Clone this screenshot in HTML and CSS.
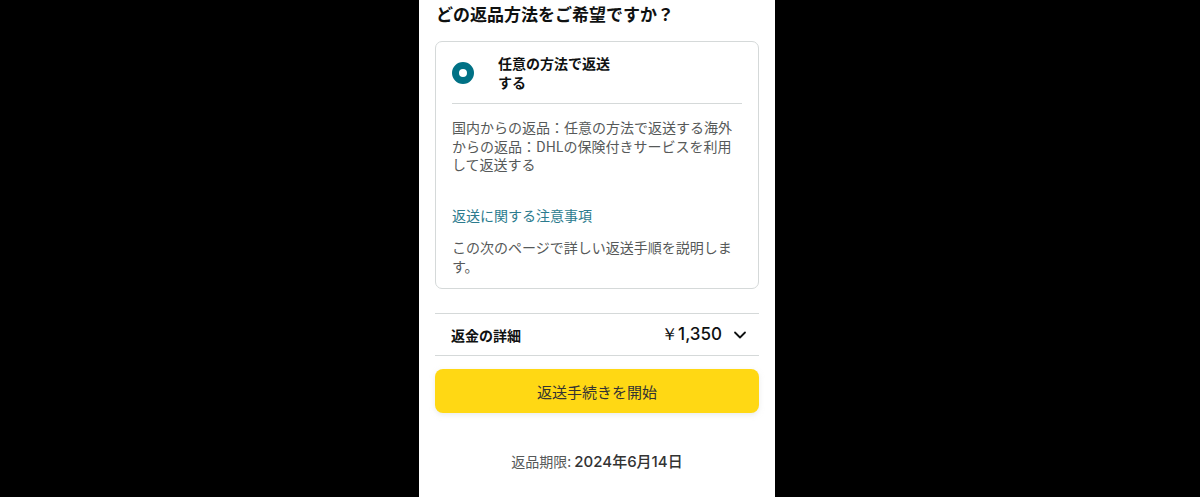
FILE: index.html
```html
<!DOCTYPE html>
<html lang="ja">
<head>
  <meta charset="UTF-8" />
  <meta name="viewport" content="width=device-width, initial-scale=1.0"/>
  <title>返品方法の選択</title>
  <link rel="stylesheet" href="styles.css">
</head>
<body>

<div class="page">
  <h2 class="question">どの返品方法をご希望ですか？</h2>

  <!-- 返送方法の選択肢 -->
  <div class="option-card">
    <label class="option-row">
      <span class="radio"></span>
      <span class="option-label">任意の方法で返送する</span>
    </label>
    <div class="option-body">
      <p class="option-desc">国内からの返品：任意の方法で返送する海外からの返品：DHLの保険付きサービスを利用して返送する</p>
      <a class="notice-link" href="#">返送に関する注意事項</a>
      <p class="option-desc">この次のページで詳しい返送手順を説明します。</p>
    </div>
  </div>

  <!-- 返金の詳細 -->
  <div class="refund-row">
    <span class="refund-title">返金の詳細</span>
    <span class="refund-amount">￥1,350
      <svg class="chevron" width="14" height="14" viewBox="0 0 14 14"><path d="M2 4.5 L7 9.5 L12 4.5" fill="none" stroke="#0f1111" stroke-width="1.8" stroke-linecap="round" stroke-linejoin="round"/></svg>
    </span>
  </div>

  <button class="btn-start">返送手続きを開始</button>

  <p class="deadline">返品期限: <strong>2024年6月14日</strong></p>
</div>

</body>
</html>
```

FILE: styles.css
```css
body {
  margin: 0;
  background: #000;
  font-family: "Noto Sans CJK JP", "Noto Sans", sans-serif;
  color: #0f1111;
  display: flex;
  justify-content: center;
  padding-right: 6px;
}
.page {
  width: 324px;
  min-height: 497px;
  background: #fff;
  padding: 0 16px;
  box-sizing: content-box;
}
.question {
  font-size: 17px;
  font-weight: bold;
  line-height: 24px;
  margin: 2px 0 15px 1px;
}
.option-card {
  border: 1px solid #d5d9d9;
  border-radius: 7px;
  padding: 12px 16px 13px;
}
.option-row { display: flex; align-items: center; gap: 24px; cursor: pointer; }
.radio {
  width: 22px;
  height: 22px;
  border-radius: 50%;
  background: #fff;
  border: 7px solid #007185;
  box-sizing: border-box;
  flex-shrink: 0;
}
.option-label {
  font-size: 14px;
  font-weight: bold;
  line-height: 19px;
  width: 120px;
}
.option-body {
  border-top: 1px solid #d5d9d9;
  margin-top: 11px;
  padding-top: 14px;
}
.option-desc {
  font-size: 14px;
  line-height: 18.5px;
  color: #565959;
  margin: 0;
}
.notice-link {
  display: block;
  font-size: 14px;
  line-height: 18.5px;
  color: #2b7b8e;
  text-decoration: none;
  margin: 32px 0 14px;
}
.refund-row {
  margin-top: 24px;
  border-top: 1px solid #d5d9d9;
  border-bottom: 1px solid #d5d9d9;
  height: 41px;
  display: flex;
  justify-content: space-between;
  align-items: center;
  padding: 0 12px 0 16px;
}
.refund-title { font-size: 14px; font-weight: bold; }
.refund-amount {
  font-family: "Inter", "Noto Sans", sans-serif;
  font-size: 17px;
  font-weight: 500;
  display: flex;
  align-items: center;
  gap: 11px;
}
.btn-start {
  display: block;
  width: 100%;
  height: 44px;
  margin-top: 13px;
  background: #ffd814;
  border: none;
  border-radius: 8px;
  box-shadow: 0 2px 5px rgba(213,217,217,0.5);
  font-family: inherit;
  font-size: 15px;
  color: #333;
  cursor: pointer;
}
.deadline {
  text-align: center;
  font-size: 14px;
  color: #565959;
  margin: 38px 0 0;
  line-height: 20px;
}
.deadline strong {
  font-family: "Inter", "Noto Sans CJK JP", sans-serif;
  font-size: 15px;
  font-weight: 500;
  color: #333;
}
```
